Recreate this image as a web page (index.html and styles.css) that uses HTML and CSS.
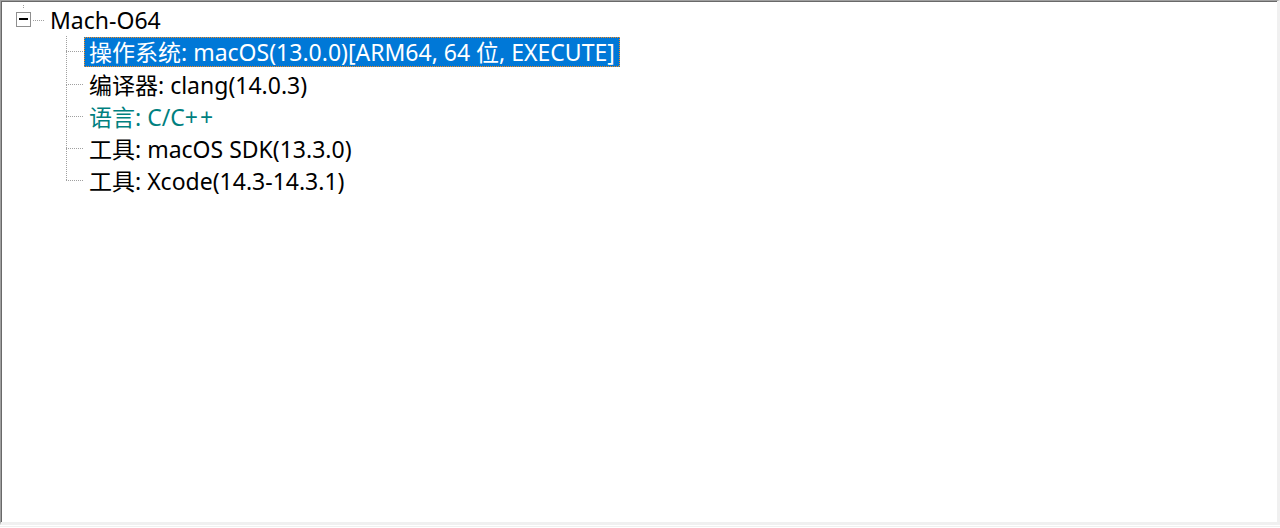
FILE: index.html
```html
<!DOCTYPE html>
<html><head><meta charset="utf-8"><title>Mach-O64</title><link rel="stylesheet" href="styles.css"></head>
<body>
<div class="panel">
  <div class="tree">
    <div class="root">
      <div class="exp-col">
        <div class="stub"></div>
        <div class="expander"><span class="minus"></span></div>
      </div>
      <div class="hline"></div>
      <div class="label">Mach-O64</div>
    </div>
    <div class="children">
      <div class="item">
        <div class="branch"><div class="up"></div><div class="down"></div></div>
        <div class="label selected">操作系统: macOS(13.0.0)[ARM64, 64 位, EXECUTE]</div>
      </div>
      <div class="item">
        <div class="branch"><div class="up"></div><div class="down"></div></div>
        <div class="label">编译器: clang(14.0.3)</div>
      </div>
      <div class="item">
        <div class="branch"><div class="up"></div><div class="down"></div></div>
        <div class="label teal">语言: C/C<span class="pp">++</span></div>
      </div>
      <div class="item">
        <div class="branch"><div class="up"></div><div class="down"></div></div>
        <div class="label">工具: macOS SDK(13.3.0)</div>
      </div>
      <div class="item last">
        <div class="branch"><div class="up"></div><div class="down"></div></div>
        <div class="label">工具: Xcode(14.3-14.3.1)</div>
      </div>
    </div>
  </div>
</div>
<div class="bottom-line"></div>
</body></html>
```
FILE: styles.css
```css
html, body {
  margin: 0;
  padding: 0;
  background: #ffffff;
}
body {
  width: 1280px;
  height: 528px;
  overflow: hidden;
  font-family: "Noto Sans", "Noto Sans CJK SC", sans-serif;
  font-size: 23px;
  color: #000;
}
.panel {
  box-sizing: border-box;
  width: 1280px;
  height: 525px;
  border-top: 1px solid #a0a0a0;
  border-left: 1px solid #a0a0a0;
  border-right: 3px solid #f0f0f0;
  border-bottom: 3px solid #f0f0f0;
  box-shadow: inset 1px 1px 0 #696969;
  background: #fff;
}
.bottom-line {
  margin-top: 1px;
  height: 1px;
  background: #f0f0f0;
}
.tree {
  padding-top: 2.9px;
}
.root {
  display: flex;
  align-items: center;
  height: 32.25px;
}
.exp-col {
  align-self: stretch;
  display: flex;
  flex-direction: column;
  align-items: center;
  width: 15px;
  margin-left: 15px;
}
.stub {
  width: 1px;
  height: 4px;
  margin-top: 1px;
  margin-bottom: 3px;
  background: repeating-linear-gradient(to bottom, #a0a0a0 0 1px, transparent 1px 2px);
}
.expander {
  box-sizing: border-box;
  width: 15px;
  height: 15px;
  border: 1px solid #8f8f8f;
  display: flex;
  align-items: center;
  justify-content: center;
  background: #fff;
}
.minus {
  width: 9px;
  height: 2px;
  background: #000;
}
.hline {
  width: 12px;
  height: 1px;
  margin-left: 2px;
  background: repeating-linear-gradient(to right, #a0a0a0 0 1px, transparent 1px 2px);
}
.label {
  box-sizing: border-box;
  height: 30px;
  line-height: 28px;
  padding: 0 4px;
  border: 1px solid transparent;
  white-space: nowrap;
}
.children {
  margin-left: 65px;
}
.item {
  display: flex;
  align-items: center;
  height: 32.25px;
}
.branch {
  align-self: stretch;
  display: flex;
  flex-direction: column;
  width: 18px;
}
.branch .up {
  flex: 1;
  background:
    repeating-linear-gradient(to bottom, #a0a0a0 0 1px, transparent 1px 2px) left top / 1px 100% no-repeat,
    repeating-linear-gradient(to right, #a0a0a0 0 1px, transparent 1px 2px) left bottom / 100% 1px no-repeat;
}
.branch .down {
  flex: 1;
  background: repeating-linear-gradient(to bottom, #a0a0a0 0 1px, transparent 1px 2px) left top / 1px 100% no-repeat;
}
.item.last .branch .down {
  background: none;
}
.label.selected {
  color: #fff;
  background:
    linear-gradient(#0078d7, #0078d7) padding-box,
    repeating-conic-gradient(#ff8c1a 0 25%, #0078d7 0 50%) 0 0 / 2px 2px border-box;
}
.label.teal {
  color: #008080;
}
.pp {
  letter-spacing: 2px;
}
```
